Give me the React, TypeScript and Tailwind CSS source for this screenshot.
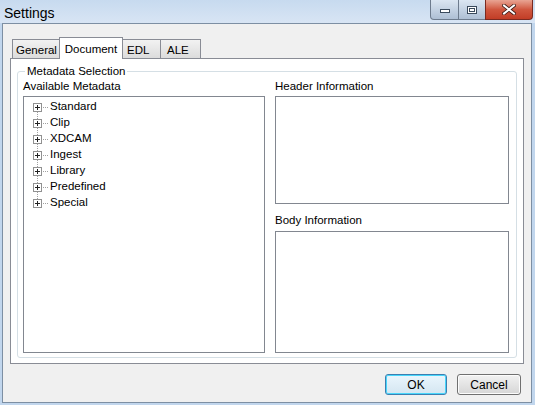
import React from 'react';

const font = { fontFamily: '"Liberation Sans", Arial, sans-serif' };

const treeItems = ['Standard', 'Clip', 'XDCAM', 'Ingest', 'Library', 'Predefined', 'Special'];

function PlusBox() {
    return (
        <svg width="9" height="9" viewBox="0 0 9 9" className="shrink-0">
            <rect x="0.5" y="0.5" width="8" height="8" fill="#fff" stroke="#919191" />
            <path d="M2 4.5h5M4.5 2v5" stroke="#222" strokeWidth="1" />
        </svg>
    );
}

function CaptionButtons() {
    return (
        <div className="absolute right-[2px] top-0 flex h-[20px]">
            <div className="flex w-[29px] items-center justify-center rounded-bl-[4px] border border-t-0 border-[#6d7b8d] bg-gradient-to-b from-[#dbe6f2] to-[#aebfd4]">
                <div className="mt-[3px] h-[4px] w-[10px] border border-[#3a4a5c] bg-white" />
            </div>
            <div className="flex w-[26px] items-center justify-center border-b border-[#6d7b8d] bg-gradient-to-b from-[#dbe6f2] to-[#aebfd4]">
                <div className="h-[8px] w-[10px] border border-[#3a4a5c] bg-white p-[1px]">
                    <div className="h-full w-full border border-[#3a4a5c]" />
                </div>
            </div>
            <div className="flex w-[48px] items-center justify-center rounded-br-[4px] border border-t-0 border-[#7a2a20] bg-gradient-to-b from-[#e8a493] via-[#d0573f] to-[#c23d26]">
                <svg width="14" height="11" viewBox="0 0 14 11">
                    <path d="M2 1.5l10 8M12 1.5l-10 8" stroke="#3b1a14" strokeWidth="3.6" strokeLinecap="square" />
                    <path d="M2 1.5l10 8M12 1.5l-10 8" stroke="#fff" strokeWidth="2" strokeLinecap="square" />
                </svg>
            </div>
        </div>
    );
}

function Tab({ label, selected, width, pad }: { label: string; selected?: boolean; width: string; pad?: string }) {
    if (selected) {
        return (
            <div
                className={`relative z-10 -mx-[2px] -mb-px flex h-[22px] ${width} items-start justify-center border border-b-0 border-[#898c95] bg-white pt-[3px] text-[11.5px] text-black`}
            >
                {label}
            </div>
        );
    }
    return (
        <div
            className={`flex h-[19px] ${width} ${pad} items-start border border-b-0 border-[#898c95] bg-gradient-to-b from-[#f2f2f2] to-[#dcdcdc] pt-[2px] text-[11.5px] text-black -ml-px first:ml-0`}
        >
            {label}
        </div>
    );
}

export default function App() {
    return (
        <div className="relative h-[405px] w-[535px] overflow-hidden bg-[#c1d6ed]" style={font}>
            <div className="flex h-[23px] items-center bg-gradient-to-b from-[#c7daef] to-[#d8e5f4] pl-[4px] pt-[3px] text-[14px] text-black">
                Settings
            </div>
            <CaptionButtons />
            <div className="ml-[2px] mr-[3px] flex h-[380px] flex-col border border-[#7d8fa3] bg-[#f0f0f0] pl-[7px] pr-[7px] pt-[13px]">
                <div className="flex items-end pl-[2px]">
                    <Tab label="General" width="w-[49px]" pad="pl-[3px]" />
                    <Tab label="Document" selected width="w-[64px]" />
                    <Tab label="EDL" width="w-[41px]" pad="pl-[6px]" />
                    <Tab label="ALE" width="w-[41px]" pad="pl-[6px]" />
                </div>
                <div className="relative h-[306px] border border-[#898c95] bg-white px-[6px] pt-[6px]">
                    <fieldset className="h-[293px] rounded-[3px] border border-[#d5dfe5] px-[5px] pb-[4px] pt-0">
                        <legend className="ml-[2px] px-[2px] text-[11.5px] leading-[13px] text-black">
                            Metadata Selection
                        </legend>
                        <div className="flex h-full gap-[10px]">
                            <div className="flex w-[242px] flex-col">
                                <div className="mb-[3px] mt-[1px] text-[11.5px] leading-[14px] text-black">
                                    Available Metadata
                                </div>
                                <div className="flex-1 border border-[#828790] bg-white pl-[9px] pt-[2px]">
                                    <div className="relative">
                                        <div className="absolute left-[4px] top-[8px] h-[96px] border-l border-dotted border-[#a0a0a0]" />
                                        {treeItems.map((item) => (
                                            <div key={item} className="relative flex h-[16px] items-center">
                                                <PlusBox />
                                                <div className="ml-px w-[5px] border-t border-dotted border-[#a0a0a0]" />
                                                <span className="ml-[2px] text-[11.5px] text-black">{item}</span>
                                            </div>
                                        ))}
                                    </div>
                                </div>
                            </div>
                            <div className="flex w-[234px] flex-col">
                                <div className="mb-[3px] mt-[1px] text-[11.5px] leading-[14px] text-black">
                                    Header Information
                                </div>
                                <div className="h-[108px] border border-[#828790] bg-white" />
                                <div className="mb-[4px] mt-[9px] text-[11.5px] leading-[14px] text-black">
                                    Body Information
                                </div>
                                <div className="flex-1 border border-[#828790] bg-white" />
                            </div>
                        </div>
                    </fieldset>
                </div>
                <div className="mt-[10px] flex justify-end gap-[10px] pr-[3px]">
                    <button className="h-[21px] w-[62px] rounded-[3px] border border-[#3c7fb1] bg-gradient-to-b from-[#eaf6fd] to-[#d4e6f1] text-[12px] text-black shadow-[inset_0_0_0_1px_#48d6fb]">
                        OK
                    </button>
                    <button className="h-[21px] w-[64px] rounded-[3px] border border-[#707070] bg-gradient-to-b from-[#f2f2f2] to-[#d6d6d6] text-[12px] text-black shadow-[inset_0_0_0_1px_#fcfcfc]">
                        Cancel
                    </button>
                </div>
            </div>
        </div>
    );
}
